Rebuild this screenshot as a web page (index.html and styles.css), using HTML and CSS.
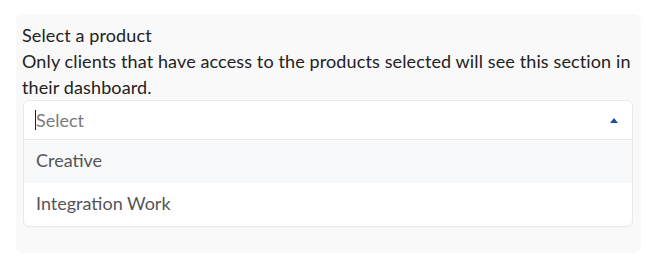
FILE: index.html
```html
<!DOCTYPE html>
<html lang="en">
<head>
  <meta charset="UTF-8" />
  <title>Select a product</title>
  <link rel="stylesheet" href="styles.css">
</head>
<body>
  <div class="panel">
    <div class="field-label">Select a product</div>
    <p class="field-help">Only clients that have access to the products selected will see this section in their dashboard.</p>

    <div class="dropdown">
      <div class="dropdown-control">
        <span class="cursor"></span><span class="placeholder">Select</span>
        <span class="arrow"></span>
      </div>
      <ul class="dropdown-menu">
        <li class="option focused">Creative</li>
        <li class="option">Integration Work</li>
      </ul>
    </div>
  </div>
</body>
</html>
```

FILE: styles.css
```css
* { box-sizing: border-box; margin: 0; padding: 0; }
body {
  margin: 14px 22px 0 16px;
  font-family: Lato, "Liberation Sans", sans-serif;
  color: #222;
  background: white;
}
.panel {
  background-color: #f9f9f9;
  border-radius: 6px;
  padding: 8px 8px 26px 6px;
}
.field-label, .field-help {
  font-size: 18px;
  line-height: 26px;
  letter-spacing: 0.12px;
}
.dropdown {
  margin-left: 1px;
  background: white;
  border: 1px solid #e8e8e8;
  border-radius: 6px;
}
.dropdown-control {
  display: flex;
  align-items: center;
  height: 39px;
  padding: 0 14px 0 11px;
  border-bottom: 1px solid #e8e8e8;
}
.cursor {
  width: 1px;
  height: 20px;
  background: #222;
}
.placeholder {
  flex: 1;
  font-size: 18px;
  color: #7b7b7b;
}
.arrow {
  width: 0;
  height: 0;
  border-left: 4px solid transparent;
  border-right: 4px solid transparent;
  border-bottom: 5px solid #1b4ea3;
}
.dropdown-menu { list-style: none; }
.option {
  height: 43px;
  padding: 0 12px 3px;
  display: flex;
  align-items: center;
  font-size: 18px;
  color: #555;
}
.option.focused { background: #f8f9fb; }
.option:last-child { border-radius: 0 0 6px 6px; }
```
